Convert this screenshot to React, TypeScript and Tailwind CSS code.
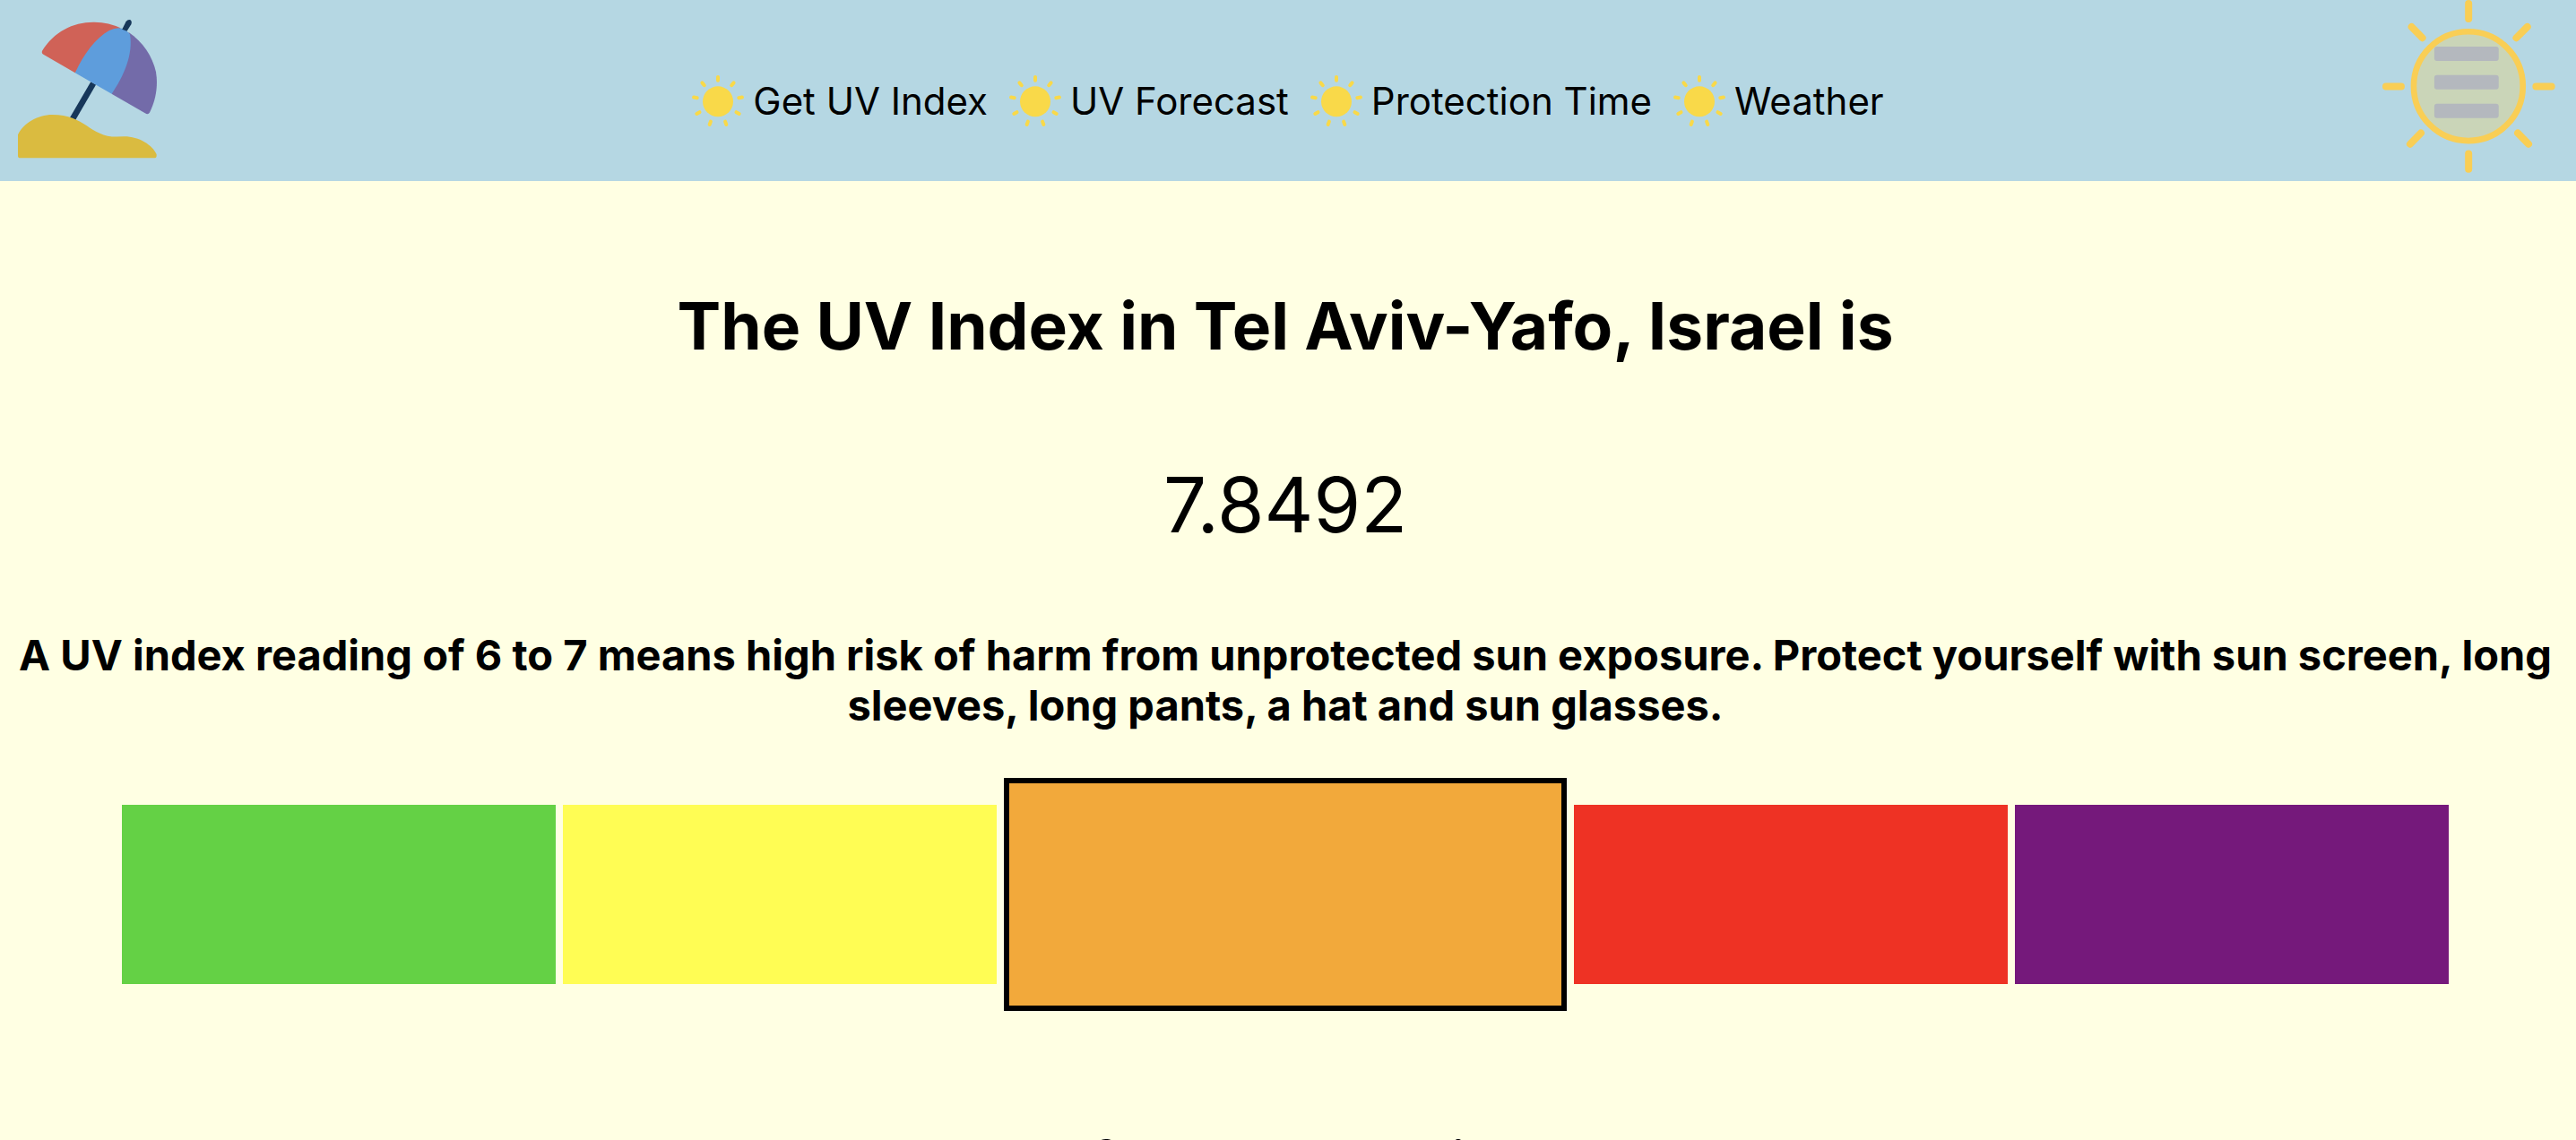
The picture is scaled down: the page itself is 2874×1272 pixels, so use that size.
import React from "react";

const navItems = ["Get UV Index", "UV Forecast", "Protection Time", "Weather"];

const levels = [
  { name: "Low", style: "h-[200px] flex-[484] bg-[#64d145]" },
  { name: "Moderate", style: "h-[200px] flex-[484] bg-[#fffd54]" },
  { name: "High", style: "h-[260px] flex-[616] border-6 border-black bg-[#f2a93b]" },
  { name: "Very high", style: "h-[200px] flex-[484] bg-[#ee3224]" },
  { name: "Extreme", style: "h-[200px] flex-[484] bg-[#75197b]" },
];

function BeachLogo() {
  return (
    <svg viewBox="60 66 464 464" className="size-[155px]" aria-hidden="true">
      <path d="M312 278 L240 402" stroke="#17375a" strokeWidth="20" />
      <path
        d="M60 450 C78 412 125 383 175 383 C285 383 300 457 390 457 L415 456 C465 456 510 485 523 516 V520 Q523 528 515 528 H68 Q60 528 60 520 Z"
        fill="#dabb40"
      />
      <path d="M251 243 L145 182 Q138 178 141 170 C180 106 245 73 315 74 Q365 75 403 94 Z" fill="#d06257" />
      <path d="M373 314 L486 379 Q495 384 500 376 C523 330 528 280 521 240 C509 188 477 140 430 108 Z" fill="#736ba9" />
      <path d="M251 243 C280 180 320 127 365 102 Q388 91 407 95 Q422 98 434 115 C446 180 414 255 373 314 Z" fill="#5e9ddc" />
      <path d="M408 98 L421 72 Q428 64 436 67 Q442 73 438 82 L424 104 Z" fill="#17375a" />
    </svg>
  );
}

function MenuSun() {
  return (
    <svg viewBox="54 0 580 580" className="size-[193px]" aria-hidden="true">
      <circle cx="342" cy="289" r="183" fill="#cad5b8" stroke="#f9ce55" strokeWidth="20" />
      <g stroke="#f9ce55" strokeWidth="24" strokeLinecap="round">
        <path d="M343 12V63M343 515V567M66 290H117M569 290H621" />
        <path d="M152 90L188 127M540 90L503 127M183 446L147 483M508 446L544 483" />
      </g>
      <g fill="#b4b8be">
        <rect x="228" y="156" width="216" height="48" rx="9" />
        <rect x="228" y="252" width="216" height="48" rx="9" />
        <rect x="228" y="348" width="216" height="48" rx="9" />
      </g>
    </svg>
  );
}

function SmallSun() {
  return (
    <svg viewBox="33 22 174 174" className="size-[58px] shrink-0" aria-hidden="true">
      <circle cx="120" cy="110" r="51" fill="#f9d949" />
      <g stroke="#f9d949" strokeWidth="12" strokeLinecap="round">
        {[0, 40, 80, 120, 160, 200, 240, 280, 320].map((angle) => (
          <path key={angle} d="M120 28V39" transform={`rotate(${angle} 120 110)`} />
        ))}
      </g>
    </svg>
  );
}

export default function App() {
  return (
    <div className="h-screen overflow-hidden bg-[#ffffe3] font-[Inter,sans-serif] text-black">
      <header className="grid h-[202px] grid-cols-[1fr_auto_1fr] items-start bg-[#b5d7e3]">
        <a href="#home" aria-label="Home" className="mt-[22px] ml-5 justify-self-start">
          <BeachLogo />
        </a>
        <nav className="mt-[83px]">
          <ul className="flex gap-6">
            {navItems.map((item) => (
              <li key={item}>
                <a href="#" className="flex items-center gap-2.5 text-[42px] leading-[60px]">
                  <SmallSun />
                  {item}
                </a>
              </li>
            ))}
          </ul>
        </nav>
        <button type="button" aria-label="Menu" className="mr-[23px] justify-self-end">
          <MenuSun />
        </button>
      </header>

      <main className="pr-1.5 text-center">
        <h1 className="pt-[120px] text-[73px] leading-[84px] font-bold">The UV Index in Tel Aviv-Yafo, Israel is</h1>
        <p className="mt-[108px] text-[85px] leading-[100px]">7.8492</p>
        <p className="mt-[89px] px-4 text-[47px] leading-[56px] font-bold">
          A UV index reading of 6 to 7 means high risk of harm from unprotected sun exposure. Protect yourself with sun
          screen, long sleeves, long pants, a hat and sun glasses.
        </p>
        <ul className="mt-[53px] flex items-center gap-2 px-[136px]">
          {levels.map((level) => (
            <li key={level.name} aria-label={level.name} className={level.style} />
          ))}
        </ul>
        <h2 className="mt-[133px] text-[60px] leading-[68px] font-bold">Safe Exposure Time</h2>
      </main>
    </div>
  );
}
